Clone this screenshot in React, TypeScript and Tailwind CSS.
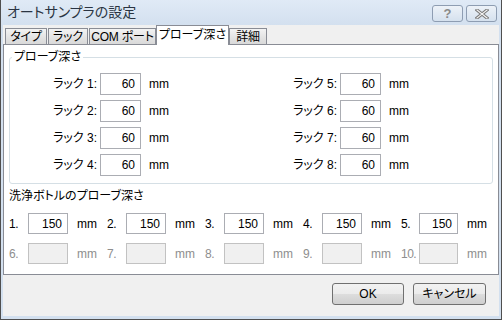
const racks = [1, 2, 3, 4, 5, 6, 7, 8];
const bottles = [
  { n: 1, v: "150" },
  { n: 2, v: "150" },
  { n: 3, v: "150" },
  { n: 4, v: "150" },
  { n: 5, v: "150" },
  { n: 6, v: "" },
  { n: 7, v: "" },
  { n: 8, v: "" },
  { n: 9, v: "" },
  { n: 10, v: "" },
];

const tabs = [
  { label: "タイプ", w: "w-[42px]" },
  { label: "ラック", w: "w-[40px]" },
  { label: "COM ポート", w: "w-[67px]" },
];

function Tab({ label, w }: { label: string; w: string }) {
  return (
    <div
      className={`flex h-[16px] items-center justify-center whitespace-nowrap border-x border-t border-[#898c95] bg-[linear-gradient(#f3f3f3,#e5e5e5_50%,#d9d9d9)] leading-[14px] tracking-[-0.2px] ${w}`}
    >
      {label}
    </div>
  );
}

function TextBox({ value, disabled, h }: { value: string; disabled?: boolean; h: string }) {
  return (
    <div
      className={`flex items-center justify-end border pr-[5px] leading-[14px] ${h} ${
        disabled ? "border-[#c2c2c2] bg-[#f0f0f0]" : "border-[#abadb3] bg-white"
      }`}
    >
      {value}
    </div>
  );
}

export default function App() {
  return (
    <div className="flex h-[320px] w-[502px] flex-col overflow-hidden border-x border-b border-[#4f4f4f] bg-[#d3e0ef] text-[12px] text-black font-['Liberation_Sans','Noto_Sans_CJK_JP',sans-serif] [font-feature-settings:'palt']">
      {/* title bar */}
      <div className="flex h-[25px] shrink-0 items-start justify-between bg-[linear-gradient(#e0eaf6,#d3e0ef)] pl-[6px] pr-[4px]">
        <span className="mt-[4px] text-[14px] leading-[17px] text-[#2a3442]">オートサンプラの設定</span>
        <div className="mt-[5px] flex gap-[3px]">
          <div className="flex h-[17px] w-[31px] items-center justify-center rounded-[3px] border border-[#8e9db2] bg-[linear-gradient(#edf2f8,#d5e1ee)] text-[13px] font-bold leading-[13px] text-[#8a8a8a]">
            ?
          </div>
          <div className="flex h-[17px] w-[31px] items-center justify-center rounded-[3px] border border-[#8e9db2] bg-[linear-gradient(#edf2f8,#d5e1ee)]">
            <svg width="14" height="10" viewBox="0 0 14 10">
              <path d="M2 1 L12 9 M12 1 L2 9" stroke="#7a7a7a" strokeWidth="3.2" strokeLinecap="square" />
              <path d="M2 1 L12 9 M12 1 L2 9" stroke="#f4f4f4" strokeWidth="1.2" strokeLinecap="square" />
            </svg>
          </div>
        </div>
      </div>

      {/* body */}
      <div className="mx-[2px] mb-[3px] flex flex-1 flex-col bg-[#f0f0f0]">
        <div className="flex h-[19px] items-end gap-[1px] pl-[2px]">
          {tabs.map((t) => (
            <Tab key={t.label} label={t.label} w={t.w} />
          ))}
          <div className="relative z-10 -mx-[1px] -mb-[1px] flex h-[20px] w-[73px] items-start justify-center border-x border-t border-[#898c95] bg-white pt-[2px] leading-[14px]">
            プローブ深さ
          </div>
          <Tab label="詳細" w="w-[38px]" />
        </div>

        <div className="flex h-[231px] flex-col border border-[#898c95] bg-white">
          <fieldset className="mx-[5px] mt-[5px] rounded-[3px] border border-[#d5dfe5] pb-[7px]">
            <legend className="ml-[2px] px-[2px] leading-[14px]">プローブ深さ</legend>
            <div className="grid grid-flow-col grid-cols-[240px_160px] grid-rows-4 gap-y-[5px] pl-[37px] pt-[9px]">
              {racks.map((r) => (
                <div key={r} className="flex items-center">
                  <span className="w-[50px] text-right leading-[14px]">ラック {r}:</span>
                  <div className="ml-[3px] w-[41px]">
                    <TextBox value="60" h="h-[22px]" />
                  </div>
                  <span className="ml-[8px] leading-[14px]">mm</span>
                </div>
              ))}
            </div>
          </fieldset>

          <div className="ml-[5px] mt-[5px] leading-[14px]">洗浄ボトルのプローブ深さ</div>

          <div className="ml-[5px] mt-[10px] grid grid-cols-[98px_98px_98px_98px_86px] gap-y-[9px]">
            {bottles.map((b) => {
              const disabled = b.v === "";
              return (
                <div
                  key={b.n}
                  className={`flex items-center ${disabled ? "text-[#8e8e8e]" : "text-black"}`}
                >
                  <span className="w-[19px] whitespace-nowrap leading-[14px] tracking-[-0.5px]">{b.n}.</span>
                  <div className="w-[40px]">
                    <TextBox value={b.v} disabled={disabled} h="h-[21px]" />
                  </div>
                  <span className="ml-[9px] leading-[14px]">mm</span>
                </div>
              );
            })}
          </div>
        </div>

        <div className="mt-[8px] flex justify-end gap-[9px] pr-[13px]">
          <div className="flex h-[22px] w-[72px] items-center justify-center rounded-[3px] border border-[#707070] bg-[linear-gradient(#f2f2f2,#ebebeb_50%,#dddddd_50%,#cfcfcf)] leading-[14px]">
            OK
          </div>
          <div className="flex h-[22px] w-[73px] items-center justify-center rounded-[3px] border border-[#707070] bg-[linear-gradient(#f2f2f2,#ebebeb_50%,#dddddd_50%,#cfcfcf)] leading-[14px]">
            キャンセル
          </div>
        </div>
      </div>
    </div>
  );
}
